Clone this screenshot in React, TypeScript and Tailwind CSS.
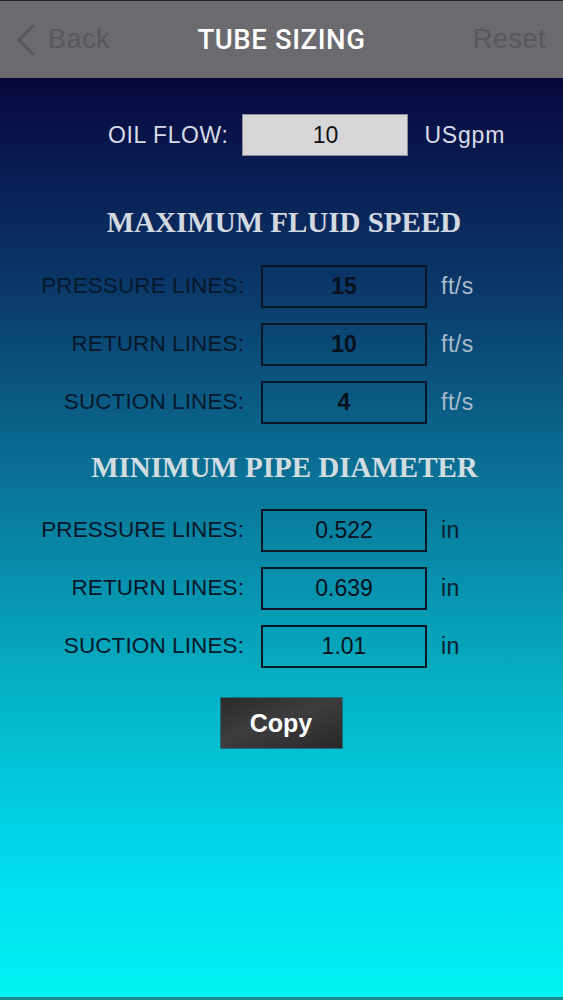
import React from "react";

const sans = { fontFamily: '"Liberation Sans", Arial, sans-serif' };

function Row({ label, value, unit, bold, unitLight }: { label: string; value: string; unit: string; bold?: boolean; unitLight?: boolean }) {
  return (
    <div className="flex items-center h-[43px]">
      <div className="w-[244px] text-right text-[22.5px] text-[#07182a] tracking-[0.1px] leading-none">{label}</div>
      <div
        className={`ml-[17px] w-[166px] h-[43px] border-2 border-[#081626] flex items-center justify-center text-[23px] text-[#06111d] leading-none ${bold ? "font-bold" : ""}`}
      >
        {value}
      </div>
      <div className={`ml-[14px] text-[23px] tracking-[0.5px] leading-none ${unitLight ? "text-[#a9bccb]" : "text-[#08202e]"}`}>{unit}</div>
    </div>
  );
}

export default function App() {
  return (
    <div
      className="w-[563px] h-[1000px] flex flex-col overflow-hidden"
      style={sans}
    >
      <div className="h-[78px] bg-[#6b6a6e] border-t border-[#222233] grid grid-cols-[1fr_auto_1fr] items-center">
        <div className="flex items-center pl-[15px] text-[#59585c]">
          <svg width="22" height="32" viewBox="0 0 22 32" fill="none">
            <path d="M18 2 L4 16 L18 30" stroke="#59585c" strokeWidth="3" strokeLinecap="round" strokeLinejoin="round" />
          </svg>
          <span className="ml-[11px] text-[27px] tracking-[0.5px] leading-none">Back</span>
        </div>
        <div className="text-[27.5px] text-white tracking-[0.6px] leading-none" style={{ fontFamily: 'Roboto, "Liberation Sans", sans-serif', fontWeight: 500 }}>
          TUBE SIZING
        </div>
        <div className="flex justify-end pr-[17px] text-[27px] tracking-[0.5px] text-[#59585c] leading-none">Reset</div>
      </div>

      <div className="flex-1 flex flex-col bg-[linear-gradient(180deg,#08073d_0%,#0b3668_22%,#0a7698_45%,#05b0c4_66%,#00dcec_86%,#00f3f3_100%)] border-b-[3px] border-[#1f8a8a]">
        <div className="mt-[36px] flex items-center pl-[108px]">
          <div className="text-[23px] text-[#d6dce6] tracking-[0.6px] leading-none">OIL FLOW:</div>
          <div className="ml-[14px] w-[166px] h-[42px] bg-[#d7d7d9] border border-[#8a8c96] flex items-center justify-center text-[23px] text-[#111] leading-none">
            10
          </div>
          <div className="ml-[16px] text-[23px] text-[#d6dce6] tracking-[0.8px] leading-none">USgpm</div>
        </div>

        <div
          className="mt-[49px] h-[34px] leading-[34px] text-center text-[29px] font-bold text-[#d2d9e0] pl-[5px]"
          style={{ fontFamily: '"Liberation Serif", "Times New Roman", serif' }}
        >
          MAXIMUM FLUID SPEED
        </div>

        <div className="mt-[26px] flex flex-col gap-[15px]">
          <Row label="PRESSURE LINES:" value="15" unit="ft/s" bold unitLight />
          <Row label="RETURN LINES:" value="10" unit="ft/s" bold unitLight />
          <Row label="SUCTION LINES:" value="4" unit="ft/s" bold unitLight />
        </div>

        <div
          className="mt-[26px] h-[34px] leading-[34px] text-center text-[29px] font-bold text-[#d2dde2] pl-[6px]"
          style={{ fontFamily: '"Liberation Serif", "Times New Roman", serif' }}
        >
          MINIMUM PIPE DIAMETER
        </div>

        <div className="mt-[25px] flex flex-col gap-[15px]">
          <Row label="PRESSURE LINES:" value="0.522" unit="in" />
          <Row label="RETURN LINES:" value="0.639" unit="in" />
          <Row label="SUCTION LINES:" value="1.01" unit="in" />
        </div>

        <div className="mt-[29px] flex justify-center pr-[1px]">
          <div className="w-[123px] h-[52px] bg-[linear-gradient(160deg,#2a2a2c_0%,#3d3d40_45%,#28282a_100%)] border border-[#1b6e78] flex items-center justify-center text-[25px] font-bold text-white leading-none">
            Copy
          </div>
        </div>
      </div>
    </div>
  );
}
